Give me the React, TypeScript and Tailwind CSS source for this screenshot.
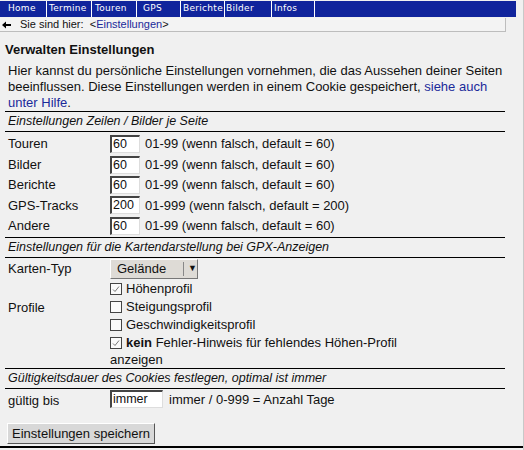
import React from "react"

const nav = [
  { label: "Home", w: "w-[47px]", pl: "pl-[8px]" },
  { label: "Termine", w: "w-[45px]", pl: "pl-[2px]" },
  { label: "Touren", w: "w-[45px]", pl: "pl-[3px]" },
  { label: "GPS", w: "w-[44px]", pl: "pl-[6px]" },
  { label: "Berichte", w: "w-[44px]", pl: "pl-[2px]" },
  { label: "Bilder", w: "w-[47px]", pl: "pl-[1px]" },
  { label: "Infos", w: "w-[43px]", pl: "pl-[2px]" },
]

const rows = [
  { label: "Touren", value: "60", hint: "01-99 (wenn falsch, default = 60)" },
  { label: "Bilder", value: "60", hint: "01-99 (wenn falsch, default = 60)" },
  { label: "Berichte", value: "60", hint: "01-99 (wenn falsch, default = 60)" },
  { label: "GPS-Tracks", value: "200", hint: "01-999 (wenn falsch, default = 200)" },
  { label: "Andere", value: "60", hint: "01-99 (wenn falsch, default = 60)" },
]

function Box({ checked }: { checked?: boolean }) {
  return (
    <span className="inline-flex w-[12px] h-[12px] shrink-0 items-center justify-center border border-[#444] bg-[#fafafa] mr-[4px]">
      {checked && (
        <svg width="10" height="10" viewBox="0 0 10 10">
          <path d="M2 5.5 L4 7.5 L8 2.5" fill="none" stroke="#777" strokeWidth="1" />
        </svg>
      )}
    </span>
  )
}

function Field({ value, w = "w-[30px]" }: { value: string; w?: string }) {
  return (
    <div
      className={`${w} h-[18px] bg-white border-l-2 border-t-2 border-l-[#444] border-t-[#444] border-r border-b border-r-[#ddd] border-b-[#ddd] pl-[1px] leading-[14px] text-[12.5px]`}
    >
      {value}
    </div>
  )
}

function Header({ children }: { children: React.ReactNode }) {
  return (
    <div className="border-t border-b border-black italic h-[21px] flex items-center pl-[3px] text-[12.5px]">
      {children}
    </div>
  )
}

export default function App() {
  return (
    <div
      className="w-[524px] h-[450px] bg-[#f0f0f0] text-[#111] overflow-hidden relative border-r border-[#c8c8c8]"
      style={{ fontFamily: "'Liberation Sans', Arial, sans-serif" }}
    >
      <div className="pt-[1px] w-[516px]">
        <div className="flex h-[16px] bg-[#10249c]">
          {nav.map((n) => (
            <div
              key={n.label}
              className={`${n.w} ${n.pl} border-r border-white text-white text-[9px] tracking-[0.3px] flex items-center whitespace-nowrap overflow-hidden`}
              style={{ fontFamily: "'DejaVu Sans', Verdana, sans-serif" }}
            >
              {n.label}
            </div>
          ))}
        </div>
      </div>
      <div className="w-[506px] h-[14px] mt-[1px] bg-[#f3f3f3] border-r border-b border-[#bdbdbd] flex items-center pl-[2px] text-[11px] leading-none">
        <svg width="9" height="8" viewBox="0 0 9 8" className="mr-[9px]">
          <path d="M0 4 L4 0.5 L4 3 L9 3 L9 5 L4 5 L4 7.5 Z" fill="#000" />
        </svg>
        <span>Sie sind hier:&nbsp; &lt;</span>
        <span className="text-[#1a2a9a]">Einstellungen</span>
        <span>&gt;</span>
      </div>

      <div className="mt-[10px] px-[5px] text-[13px] w-[510px]">
        <h1 className="font-bold text-[13px] leading-[16px]">Verwalten Einstellungen</h1>
        <p className="mt-[5px] pl-[3px] w-[508px] leading-[16px]">
          Hier kannst du persönliche Einstellungen vornehmen, die das Aussehen deiner Seiten beeinflussen. Diese
          Einstellungen werden in einem Cookie gespeichert, <span className="text-[#1a2a9a]">siehe auch unter Hilfe</span>.
        </p>

        <div className="w-[500px]">
          <Header>Einstellungen Zeilen / Bilder je Seite</Header>
          <div className="pt-[2px] pb-[1px]">
            {rows.map((r) => (
              <div key={r.label} className="flex items-center h-[20.4px]">
                <div className="w-[105px] pl-[3px]">{r.label}</div>
                <Field value={r.value} />
                <div className="pl-[5px]">{r.hint}</div>
              </div>
            ))}
          </div>

          <Header>Einstellungen für die Kartendarstellung bei GPX-Anzeigen</Header>
          <div className="flex items-center h-[22px]">
            <div className="w-[105px] pl-[3px]">Karten-Typ</div>
            <div className="w-[88px] h-[20px] flex items-center bg-[#dedbd6] border border-t-white border-l-white border-r-[#777] border-b-[#777]">
              <span className="pl-[6px] w-[72px]">Gelände</span>
              <span className="h-[14px] border-l border-[#888] flex items-center pl-[4px] text-[9px]">▼</span>
            </div>
          </div>
          <div className="flex">
            <div className="w-[105px] pl-[3px] pt-[20px] leading-[16px]">Profile</div>
            <div className="w-[292px]">
              <div className="flex items-center h-[18px]">
                <Box checked />
                Höhenprofil
              </div>
              <div className="flex items-center h-[18px]">
                <Box />
                Steigungsprofil
              </div>
              <div className="flex items-center h-[18px]">
                <Box />
                Geschwindigkeitsprofil
              </div>
              <div className="leading-[17px]">
                <span className="inline-flex align-[-1px]">
                  <Box checked />
                </span>
                <b>kein</b> Fehler-Hinweis für fehlendes Höhen-Profil anzeigen
              </div>
            </div>
          </div>

          <Header>Gültigkeitsdauer des Cookies festlegen, optimal ist immer</Header>
          <div className="flex items-center h-[21px]">
            <div className="w-[105px] pl-[3px] pt-[2px]">gültig bis</div>
            <Field value="immer" w="w-[53px]" />
            <div className="pl-[6px]">immer / 0-999 = Anzahl Tage</div>
          </div>
        </div>

        <button className="mt-[13px] ml-[2px] h-[21px] px-[4px] bg-[#d8d8d8] border border-t-white border-l-white border-r-[#555] border-b-[#555] text-[13px] leading-none">
          Einstellungen speichern
        </button>
      </div>
      <div className="absolute left-0 right-0 top-[446px] h-[2px] bg-black" />
    </div>
  )
}
